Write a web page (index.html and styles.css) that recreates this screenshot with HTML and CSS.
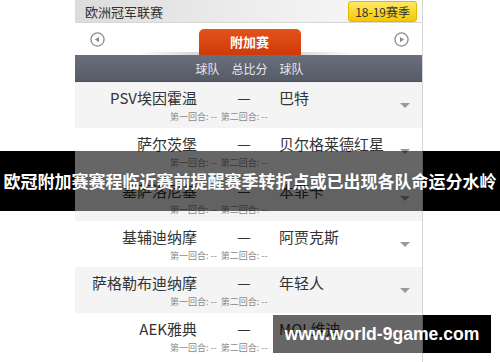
FILE: index.html
```html
<!DOCTYPE html>
<html lang="zh-CN">
<head>
    <meta charset="UTF-8">
    <meta name="viewport" content="width=device-width, initial-scale=1.0">
    <title>欧冠附加赛</title>
    <link rel="stylesheet" href="styles.css">
</head>
<body>
    <div class="page">
        <div class="panel">
            <div class="header">
                <span class="title">欧洲冠军联赛</span>
                <span class="season">18-19赛季</span>
            </div>
            <div class="tabs">
                <span class="nav-btn">
                    <svg width="15" height="15" viewBox="0 0 16 16"><circle cx="8" cy="8" r="7" fill="none" stroke="#8a8a8a" stroke-width="1.4"/><path d="M5.2 8 L9.6 5.2 L9.6 10.8 Z" fill="#8a8a8a"/></svg>
                </span>
                <span class="tab active">附加赛</span>
                <span class="nav-btn">
                    <svg width="15" height="15" viewBox="0 0 16 16"><circle cx="8" cy="8" r="7" fill="none" stroke="#8a8a8a" stroke-width="1.4"/><path d="M10.8 8 L6.4 5.2 L6.4 10.8 Z" fill="#8a8a8a"/></svg>
                </span>
            </div>
            <div class="thead">
                <span>球队</span>
                <span>总比分</span>
                <span>球队</span>
            </div>
            <ul class="matches">
                <li class="match">
                    <span class="home">PSV埃因霍温</span>
                    <span class="vs">—</span>
                    <span class="away">巴特</span>
                    <span class="toggle"></span>
                    <span class="legs">第一回合: --&nbsp; 第二回合: --</span>
                </li>
                <li class="match">
                    <span class="home">萨尔茨堡</span>
                    <span class="vs">—</span>
                    <span class="away">贝尔格莱德红星</span>
                    <span class="toggle"></span>
                    <span class="legs">第一回合: --&nbsp; 第二回合: --</span>
                </li>
                <li class="match">
                    <span class="home">塞萨洛尼基</span>
                    <span class="vs">—</span>
                    <span class="away">本菲卡</span>
                    <span class="toggle"></span>
                    <span class="legs">第一回合: --&nbsp; 第二回合: --</span>
                </li>
                <li class="match">
                    <span class="home">基辅迪纳摩</span>
                    <span class="vs">—</span>
                    <span class="away">阿贾克斯</span>
                    <span class="toggle"></span>
                    <span class="legs">第一回合: --&nbsp; 第二回合: --</span>
                </li>
                <li class="match">
                    <span class="home">萨格勒布迪纳摩</span>
                    <span class="vs">—</span>
                    <span class="away">年轻人</span>
                    <span class="toggle"></span>
                    <span class="legs">第一回合: --&nbsp; 第二回合: --</span>
                </li>
                <li class="match">
                    <span class="home">AEK雅典</span>
                    <span class="vs">—</span>
                    <span class="away">MOL维迪</span>
                    <span class="toggle"></span>
                    <span class="legs">第一回合: --&nbsp; 第二回合: --</span>
                </li>
            </ul>
        </div>
        <div class="caption">欧冠附加赛赛程临近赛前提醒赛季转折点或已出现各队命运分水岭</div>
        <div class="watermark">www.world-9game.com</div>
    </div>
</body>
</html>
```

FILE: styles.css
```css
*{
    padding: 0;
    margin: 0;
    box-sizing: border-box;
}
ul,ol{
    list-style: none;
}
body{
    background: #fff;
    font-family: "Noto Sans CJK SC", "Noto Sans", sans-serif;
    color: #333;
}
.page{
    position: relative;
    width: 500px;
    height: 362px;
    overflow: hidden;
}
.panel{
    width: 348px;
    margin-left: 75px;
    border-right: 1px solid #d4d4d4;
    height: 362px;
}
.header{
    height: 23px;
    display: flex;
    align-items: center;
    justify-content: space-between;
    padding: 0 5px 0 10px;
    background: linear-gradient(to right, #dcdcdc, #f0f0f0 60%, #fafafa);
    border-bottom: 1px solid #d6d6d6;
}
.header .title{
    font-size: 13px;
    color: #333;
}
.header .season{
    font-size: 12px;
    line-height: 20px;
    height: 21px;
    padding: 0 6px;
    border-radius: 3px;
    background: linear-gradient(#ffe866, #f4c800);
    border: 1px solid #e0b800;
    color: #333;
}
.tabs{
    height: 32px;
    display: flex;
    justify-content: space-between;
    align-items: flex-end;
    padding: 0 13px 0 15px;
    background: linear-gradient(to right, rgba(170,170,170,0) 18%, #b4b4b4 50%, rgba(170,170,170,0) 80%) left bottom / 100% 3px no-repeat #fff;
}
.tabs .nav-btn{
    align-self: center;
    height: 15px;
    display: flex;
}
.tabs .tab{
    width: 102px;
    height: 26px;
    line-height: 25px;
    text-align: center;
    font-size: 13px;
    font-weight: bold;
    color: #fff;
    background: linear-gradient(#e4531c, #cf3a08);
    border-radius: 5px 5px 0 0;
}
.thead{
    height: 27px;
    display: flex;
    justify-content: center;
    align-items: center;
    gap: 12px;
    padding-left: 2px;
    font-size: 12px;
    color: #e6e8ec;
    background: linear-gradient(#6a707b, #555b67);
    border-bottom: 1px solid #4a4f5a;
}
.matches .match{
    height: 46.3px;
    display: grid;
    grid-template-columns: 122px 82px 1fr 32px;
    grid-template-rows: 20px 12px;
    row-gap: 3px;
    padding-top: 6px;
    background: #f4f4f4;
}
.matches .match:nth-child(even){
    background: #fff;
}
.match .home{
    text-align: right;
    font-size: 15px;
    line-height: 20px;
}
.match .vs{
    text-align: center;
    padding-left: 12px;
    font-size: 15px;
    line-height: 20px;
}
.match .away{
    font-size: 15px;
    line-height: 20px;
}
.match .toggle{
    grid-row: 1 / 3;
    grid-column: 4;
    align-self: center;
    justify-self: start;
    margin-left: 10px;
    width: 0;
    height: 0;
    border-left: 5px solid transparent;
    border-right: 5px solid transparent;
    border-top: 5px solid #9a9a9a;
}
.match .legs{
    grid-column: 1 / 4;
    grid-row: 2;
    padding-left: 95px;
    font-size: 9px;
    line-height: 12px;
    color: #8a8a8a;
    white-space: nowrap;
}
.caption{
    position: absolute;
    left: 0;
    top: 151px;
    width: 500px;
    height: 60px;
    line-height: 60px;
    text-align: center;
    font-size: 17px;
    font-weight: bold;
    color: #fff;
    white-space: nowrap;
    background: linear-gradient(to right, #000 75px, rgba(0,0,0,.6) 75px, rgba(0,0,0,.6) 423px, #000 423px);
}
.watermark{
    position: absolute;
    left: 273px;
    top: 315px;
    width: 218px;
    height: 38px;
    line-height: 38px;
    text-align: center;
    font-family: "Liberation Sans", Arial, sans-serif;
    font-size: 17.6px;
    font-weight: bold;
    color: #fff;
    white-space: nowrap;
    background: linear-gradient(to right, rgba(0,0,0,.6) 150px, #000 150px);
}
```
